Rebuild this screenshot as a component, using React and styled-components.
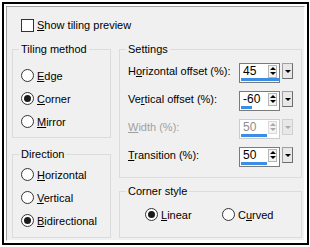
import React from "react";
import styled, { createGlobalStyle } from "styled-components";

const GlobalStyle = createGlobalStyle`
  html, body { margin: 0; padding: 0; background: #fff; }
  body {
    font-family: "Liberation Sans", Arial, sans-serif;
    font-size: 11px;
    color: #000;
  }
`;

const Screen = styled.div`
  width: 310px;
  height: 247px;
  box-sizing: border-box;
  padding: 2px;
  background: #fff;
  display: flex;
`;

const Frame = styled.div`
  flex: 1;
  display: flex;
  border: 2px solid #000;
  padding: 2px;
  background: #fff;
`;

const Panel = styled.div`
  flex: 1;
  display: flex;
  flex-direction: column;
  background: #f0f0f0;
  border-top: 1px solid #a0a0a0;
  border-left: 1px solid #a0a0a0;
  border-right: 1px solid #fff;
  border-bottom: 1px solid #fff;
  padding: 11px 2px 0 5px;
`;

const CheckRow = styled.label`
  display: flex;
  align-items: center;
  gap: 3px;
  height: 14px;
  padding-left: 9px;
`;

const CheckBox = styled.span`
  width: 13px;
  height: 13px;
  box-sizing: border-box;
  border: 1px solid #333;
  background: #fff;
`;

const U = styled.span`
  text-decoration: underline;
  text-underline-offset: 1px;
`;

const Columns = styled.div`
  display: grid;
  grid-template-columns: 99px 183px;
  column-gap: 8px;
  margin-top: 11px;
`;

const Column = styled.div`
  display: flex;
  flex-direction: column;
  gap: ${(p) => p.$gap}px;
`;

const Group = styled.fieldset`
  display: block;
  margin: 0;
  padding: 0;
  min-width: 0;
  box-sizing: border-box;
  height: ${(p) => p.$h}px;
  border: 1px solid #dcdcdc;
`;

const Legend = styled.legend`
  float: none;
  width: auto;
  margin: 0 0 0 6px;
  padding: 0 2px;
  line-height: 13px;
  text-align: left;
`;

const GroupBody = styled.div`
  display: flex;
  flex-direction: column;
  gap: ${(p) => p.$gap || 0}px;
  padding: ${(p) => p.$pad};
`;

const Option = styled.label`
  display: flex;
  align-items: center;
  gap: 3px;
  height: 13px;
  white-space: nowrap;
`;

const RadioDot = styled.span`
  width: 13px;
  height: 13px;
  box-sizing: border-box;
  border: 1px solid #333;
  border-radius: 50%;
  background: #fff;
  display: flex;
  align-items: center;
  justify-content: center;
  flex: none;

  &::after {
    content: "";
    width: 7px;
    height: 7px;
    border-radius: 50%;
    background: ${(p) => (p.$checked ? "#1a1a1a" : "transparent")};
  }
`;

const OptionRow = styled.div`
  display: grid;
  grid-template-columns: 77px auto;
`;

const SettingRow = styled.div`
  display: flex;
  align-items: center;
  justify-content: space-between;
  height: 20px;
  color: ${(p) => (p.$disabled ? "#a0a0a0" : "#000")};
`;

const Label = styled.span`
  margin-top: -4px;
  white-space: nowrap;
`;

const Spin = styled.div`
  display: flex;
  gap: 2px;
  align-items: flex-start;
`;

const EditBox = styled.div`
  width: 41px;
  height: 20px;
  box-sizing: border-box;
  border: 1px solid ${(p) => (p.$disabled ? "#cccccc" : "#7a7a7a")};
  background: #fff;
  display: flex;
  flex-direction: column;
`;

const EditLine = styled.div`
  flex: 1;
  display: flex;
  align-items: center;
  padding-left: 3px;
  font-size: 12px;
  color: ${(p) => (p.$disabled ? "#8d8d8d" : "#000")};
`;

const Value = styled.span`
  flex: 1;
`;

const Arrows = styled.div`
  width: 9px;
  height: 13px;
  margin-right: 2px;
  box-sizing: border-box;
  border: 1px solid ${(p) => (p.$disabled ? "#dadada" : "#b5b5b5")};
  background: #f4f4f4;
  display: flex;
  flex-direction: column;
  align-items: center;
  justify-content: space-around;
`;

const Tri = styled.span`
  width: 0;
  height: 0;
  border-left: 3px solid transparent;
  border-right: 3px solid transparent;
  ${(p) => (p.$up ? "border-bottom" : "border-top")}: 3px solid
    ${(p) => (p.$disabled ? "#a8a8a8" : "#000")};
`;

const Bar = styled.div`
  height: 3px;
  margin: 0 0 1px 1px;
  background: #3a8ee6;
`;

const DropBtn = styled.div`
  width: 11px;
  height: 16px;
  box-sizing: border-box;
  border: 1px solid ${(p) => (p.$disabled ? "#d0d0d0" : "#a0a0a0")};
  border-right-color: ${(p) => (p.$disabled ? "#d0d0d0" : "#6d6d6d")};
  border-bottom-color: ${(p) => (p.$disabled ? "#d0d0d0" : "#6d6d6d")};
  background: #e8e8e8;
  display: flex;
  align-items: center;
  justify-content: center;
`;

const settings = [
  { pre: "H", u: "o", post: "rizontal offset (%):", value: "45", bar: 38 },
  { pre: "Ve", u: "r", post: "tical offset (%):", value: "-60", bar: 11 },
  { pre: "", u: "W", post: "idth (%):", value: "50", bar: 26, disabled: true },
  { pre: "", u: "T", post: "ransition (%):", value: "50", bar: 26 },
];

function Radio({ checked, children }) {
  return (
    <Option>
      <RadioDot $checked={checked} />
      <span>{children}</span>
    </Option>
  );
}

function Spinner({ value, bar, disabled }) {
  return (
    <Spin>
      <EditBox $disabled={disabled}>
        <EditLine $disabled={disabled}>
          <Value>{value}</Value>
          <Arrows $disabled={disabled}>
            <Tri $up $disabled={disabled} />
            <Tri $disabled={disabled} />
          </Arrows>
        </EditLine>
        <Bar style={{ width: bar }} />
      </EditBox>
      <DropBtn $disabled={disabled}>
        <Tri $disabled={disabled} />
      </DropBtn>
    </Spin>
  );
}

export default function App() {
  return (
    <Screen>
      <GlobalStyle />
      <Frame>
        <Panel>
          <CheckRow>
            <CheckBox />
            <span>
              <U>S</U>how tiling preview
            </span>
          </CheckRow>
          <Columns>
            <Column $gap={10}>
              <Group $h={95}>
                <Legend>Tiling method</Legend>
                <GroupBody $pad="13px 8px 0 8px" $gap={10}>
                  <Radio>
                    <U>E</U>dge
                  </Radio>
                  <Radio checked>
                    <U>C</U>orner
                  </Radio>
                  <Radio>
                    <U>M</U>irror
                  </Radio>
                </GroupBody>
              </Group>
              <Group $h={90}>
                <Legend>Direction</Legend>
                <GroupBody $pad="7px 8px 0 8px" $gap={10}>
                  <Radio>
                    <U>H</U>orizontal
                  </Radio>
                  <Radio>
                    <U>V</U>ertical
                  </Radio>
                  <Radio checked>
                    <U>B</U>idirectional
                  </Radio>
                </GroupBody>
              </Group>
            </Column>
            <Column $gap={7}>
              <Group $h={135}>
                <Legend>Settings</Legend>
                <GroupBody $pad="7px 8px 0 8px" $gap={8}>
                  {settings.map((s) => (
                    <SettingRow key={s.u + s.post} $disabled={s.disabled}>
                      <Label>
                        {s.pre}
                        <U>{s.u}</U>
                        {s.post}
                      </Label>
                      <Spinner value={s.value} bar={s.bar} disabled={s.disabled} />
                    </SettingRow>
                  ))}
                </GroupBody>
              </Group>
              <Group $h={53}>
                <Legend>Corner style</Legend>
                <GroupBody $pad="10px 8px 0 25px">
                  <OptionRow>
                    <Radio checked>
                      <U>L</U>inear
                    </Radio>
                    <Radio>
                      C<U>u</U>rved
                    </Radio>
                  </OptionRow>
                </GroupBody>
              </Group>
            </Column>
          </Columns>
        </Panel>
      </Frame>
    </Screen>
  );
}
